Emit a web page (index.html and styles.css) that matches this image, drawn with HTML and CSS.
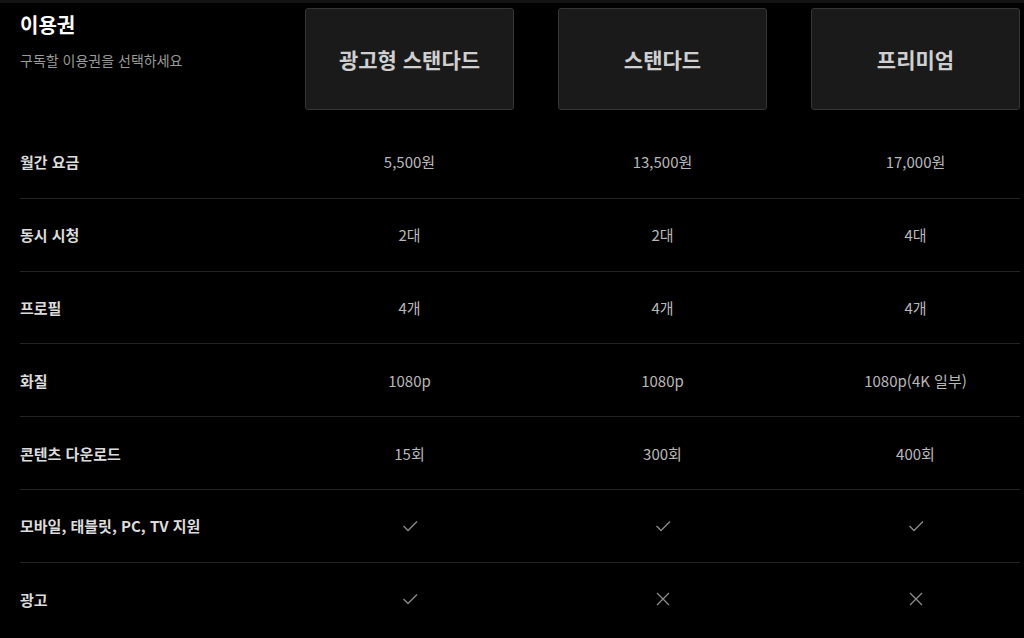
FILE: index.html
```html
<!DOCTYPE html>
<html lang="ko">
<head>
<meta charset="utf-8">
<title>이용권</title>
<link rel="stylesheet" href="styles.css">
</head>
<body>
<div class="topbar"></div>
<main class="plans">
  <div class="head">
    <div class="intro">
      <h1 class="title">이용권</h1>
      <p class="subtitle">구독할 이용권을 선택하세요</p>
    </div>
    <div class="card">광고형 스탠다드</div>
    <div class="card">스탠다드</div>
    <div class="card">프리미엄</div>
  </div>

  <div class="row">
    <div class="label">월간 요금</div>
    <div class="val">5,500원</div>
    <div class="val">13,500원</div>
    <div class="val">17,000원</div>
  </div>
  <div class="row">
    <div class="label">동시 시청</div>
    <div class="val">2대</div>
    <div class="val">2대</div>
    <div class="val">4대</div>
  </div>
  <div class="row">
    <div class="label">프로필</div>
    <div class="val">4개</div>
    <div class="val">4개</div>
    <div class="val">4개</div>
  </div>
  <div class="row">
    <div class="label">화질</div>
    <div class="val">1080p</div>
    <div class="val">1080p</div>
    <div class="val">1080p(4K 일부)</div>
  </div>
  <div class="row">
    <div class="label">콘텐츠 다운로드</div>
    <div class="val">15회</div>
    <div class="val">300회</div>
    <div class="val">400회</div>
  </div>
  <div class="row">
    <div class="label">모바일, 태블릿, PC, TV 지원</div>
    <div class="val"><svg class="icon" viewBox="0 0 16 16"><polyline points="1.5,8 6,12.5 15,3.5"/></svg></div>
    <div class="val"><svg class="icon" viewBox="0 0 16 16"><polyline points="1.5,8 6,12.5 15,3.5"/></svg></div>
    <div class="val"><svg class="icon" viewBox="0 0 16 16"><polyline points="1.5,8 6,12.5 15,3.5"/></svg></div>
  </div>
  <div class="row last">
    <div class="label">광고</div>
    <div class="val"><svg class="icon" viewBox="0 0 16 16"><polyline points="1.5,8 6,12.5 15,3.5"/></svg></div>
    <div class="val"><svg class="icon" viewBox="0 0 16 16"><path d="M2 2 L14 14 M14 2 L2 14"/></svg></div>
    <div class="val"><svg class="icon" viewBox="0 0 16 16"><path d="M2 2 L14 14 M14 2 L2 14"/></svg></div>
  </div>
</main>
</body>
</html>
```

FILE: styles.css
```css
* { box-sizing: border-box; }

html, body {
  margin: 0;
  padding: 0;
  background: #000;
  color: #ddd;
  font-family: "Noto Sans CJK KR", "Noto Sans", sans-serif;
}

.topbar {
  height: 3px;
  background: #141414;
}

.plans {
  padding: 5px 4px 0 20px;
}

.head,
.row {
  display: grid;
  grid-template-columns: 241px repeat(3, 209px);
  column-gap: 44px;
}

.head {
  padding-bottom: 16px;
  align-items: start;
}

.intro {
  padding-top: 3px;
}

.title {
  margin: 0;
  font-size: 20px;
  line-height: 28px;
  font-weight: 700;
  color: #fff;
}

.subtitle {
  margin: 11px 0 0;
  font-size: 14px;
  line-height: 20px;
  color: #9a9a9a;
}

.card {
  height: 102px;
  display: flex;
  align-items: center;
  justify-content: center;
  background: #1a1a1a;
  border: 1px solid #353535;
  border-radius: 3px;
  font-size: 21px;
  font-weight: 700;
  color: #cfcfcf;
}

.row {
  height: 72.8px;
  align-items: center;
  border-bottom: 1px solid #242424;
}

.row.last {
  border-bottom: none;
}

.label {
  font-size: 15px;
  font-weight: 700;
  color: #dcdcdc;
  white-space: nowrap;
}

.val {
  text-align: center;
  font-size: 15px;
  color: #b8b8b8;
  display: flex;
  justify-content: center;
  align-items: center;
}

.icon {
  width: 16px;
  height: 16px;
  fill: none;
  stroke: #8c8c8c;
  stroke-width: 1.3;
}
```
